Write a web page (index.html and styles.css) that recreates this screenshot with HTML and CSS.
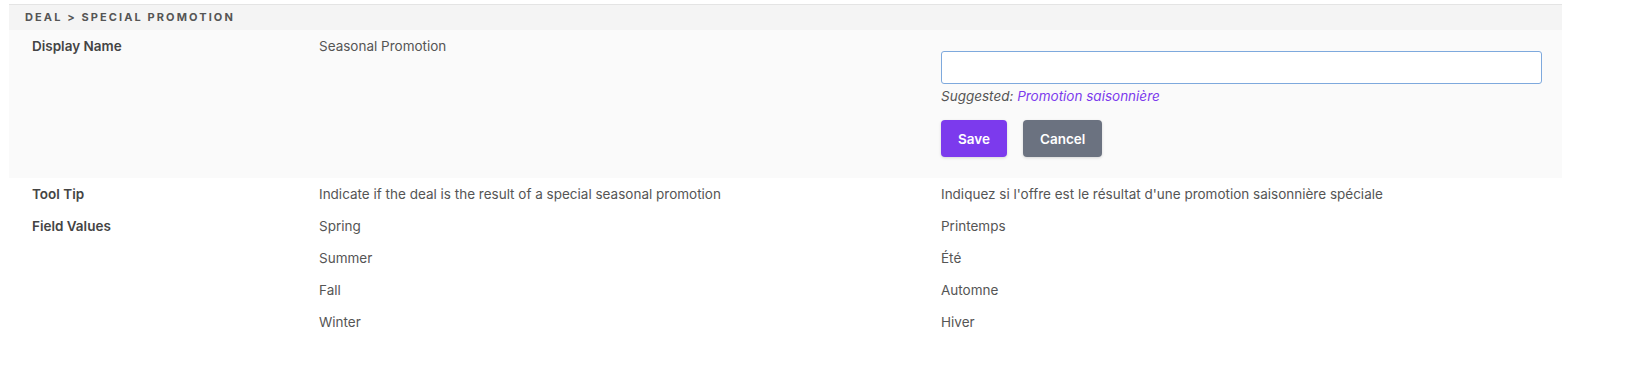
FILE: index.html
```html
<!DOCTYPE html>
<html lang="en">
<head>
    <link rel="stylesheet" href="styles.css">
    <meta charset="UTF-8">
    <title>Deal - Special Promotion</title>
</head>
<body>
    <section class="field_card">
        <div class="field_header">DEAL &gt; SPECIAL PROMOTION</div>
        <div class="row row_edit">
            <div class="label">Display Name</div>
            <div class="value">Seasonal Promotion</div>
            <div class="edit">
                <input class="edit_input" type="text">
                <div class="suggested">Suggested: <a href="#">Promotion saisonnière</a></div>
                <div class="actions">
                    <button class="btn btn_save">Save</button>
                    <button class="btn btn_cancel">Cancel</button>
                </div>
            </div>
        </div>
        <div class="row">
            <div class="label">Tool Tip</div>
            <div class="value">Indicate if the deal is the result of a special seasonal promotion</div>
            <div class="value">Indiquez si l'offre est le résultat d'une promotion saisonnière spéciale</div>
        </div>
        <div class="row">
            <div class="label">Field Values</div>
            <div class="value">Spring</div>
            <div class="value">Printemps</div>
        </div>
        <div class="row">
            <div class="label"></div>
            <div class="value">Summer</div>
            <div class="value">Été</div>
        </div>
        <div class="row">
            <div class="label"></div>
            <div class="value">Fall</div>
            <div class="value">Automne</div>
        </div>
        <div class="row">
            <div class="label"></div>
            <div class="value">Winter</div>
            <div class="value">Hiver</div>
        </div>
    </section>
</body>
</html>
```

FILE: styles.css
```css
body {
    margin: 0;
    padding: 0;
    font-family: Inter, "Noto Sans", sans-serif;
    font-size: 13.5px;
    color: #555;
    background: #fff;
}
.field_card {
    margin: 4px 0 0 9px;
    width: 1553px;
    border-top: 1px solid #e4e4e4;
}
.field_header {
    background-color: #f4f4f4;
    height: 25px;
    line-height: 25px;
    padding-left: 16px;
    font-size: 11px;
    font-weight: 700;
    letter-spacing: 2.1px;
    color: #555;
}
.row {
    display: grid;
    grid-template-columns: 287px 622px 1fr;
    padding: 6px 20px 6px 23px;
    line-height: 20px;
}
.row_edit {
    background-color: #fafafa;
    padding-bottom: 21px;
}
.label {
    font-weight: 600;
    color: #444;
}
.edit_input {
    display: block;
    box-sizing: border-box;
    width: 100%;
    height: 33px;
    margin-top: 15px;
    border: 1px solid #7ea9dd;
    border-radius: 3px;
    background: #fff;
    outline: none;
    font-family: inherit;
    font-size: 13.5px;
}
.suggested {
    margin-top: 4px;
    line-height: 16px;
    font-style: italic;
    color: #555;
}
.suggested a {
    color: #7c3aed;
    text-decoration: none;
}
.actions {
    display: flex;
    gap: 16px;
    margin-top: 16px;
}
.btn {
    height: 37px;
    padding: 0 17px;
    border: none;
    border-radius: 4px;
    font-family: inherit;
    font-size: 13.5px;
    font-weight: 600;
    color: #fff;
    box-shadow: 0 1px 3px rgba(0, 0, 0, 0.15);
}
.btn_save {
    background-color: #7c3aed;
}
.btn_cancel {
    background-color: #6b7280;
}
```
